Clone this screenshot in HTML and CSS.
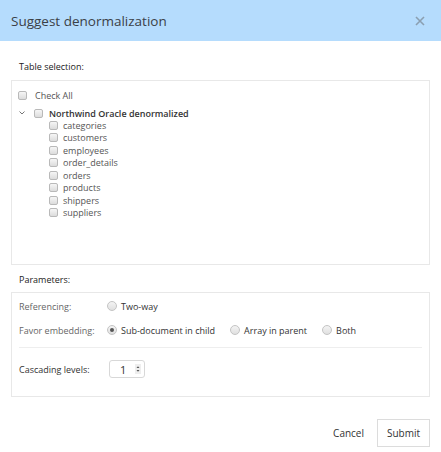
FILE: index.html
```html
<!DOCTYPE html>
<html>
<head>
<meta charset="utf-8">
<link rel="stylesheet" href="styles.css">
</head>
<body>
<div class="dialog">
  <div class="header">
    <span class="title">Suggest denormalization</span>
    <svg class="close" width="10" height="10" viewBox="0 0 10 10"><path d="M1 1L9 9M9 1L1 9" stroke="#8b9fb1" stroke-width="1.6"/></svg>
  </div>
  <div class="content">
    <div class="section-label">Table selection:</div>
    <div class="box tree">
      <div class="row checkall"><span class="cb"></span><span class="txt">Check All</span></div>
      <div class="row db">
        <svg class="chev" width="6" height="4" viewBox="0 0 6 4"><path d="M0.5 0.5L3 3L5.5 0.5" fill="none" stroke="#666" stroke-width="0.9"/></svg>
        <span class="cb"></span><span class="txt bold">Northwind Oracle denormalized</span>
      </div>
      <div class="children">
        <div class="row child"><span class="cb"></span><span class="txt">categories</span></div>
        <div class="row child"><span class="cb"></span><span class="txt">customers</span></div>
        <div class="row child"><span class="cb"></span><span class="txt">employees</span></div>
        <div class="row child"><span class="cb"></span><span class="txt">order_details</span></div>
        <div class="row child"><span class="cb"></span><span class="txt">orders</span></div>
        <div class="row child"><span class="cb"></span><span class="txt">products</span></div>
        <div class="row child"><span class="cb"></span><span class="txt">shippers</span></div>
        <div class="row child"><span class="cb"></span><span class="txt">suppliers</span></div>
      </div>
    </div>
    <div class="section-label params-label">Parameters:</div>
    <div class="box params">
      <div class="prow">
        <span class="plabel">Referencing:</span>
        <span class="opt"><span class="radio"></span>Two-way</span>
      </div>
      <div class="prow second">
        <span class="plabel">Favor embedding:</span>
        <span class="opt"><span class="radio on"></span>Sub-document in child</span>
        <span class="opt"><span class="radio"></span>Array in parent</span>
        <span class="opt"><span class="radio"></span>Both</span>
      </div>
      <div class="sep"></div>
      <div class="prow casc">
        <span class="plabel dark">Cascading levels:</span>
        <span class="num"><span class="numval">1</span><span class="spin"><svg width="4" height="8" viewBox="0 0 4 8"><path d="M0.5 3L2 1.2L3.5 3Z M0.5 5L2 6.8L3.5 5Z" fill="#555"/></svg></span></span>
      </div>
    </div>
    <div class="footer">
      <span class="btn link">Cancel</span>
      <span class="btn outline">Submit</span>
    </div>
  </div>
</div>
</body>
</html>
```
FILE: styles.css
```css
html, body { margin: 0; padding: 0; background: #fff; }
body { font-family: "Open Sans", "Noto Sans", sans-serif; color: #555; }
.dialog { width: 441px; height: 452px; }
.header { height: 41px; background: #b5dcfd; display: flex; align-items: center; justify-content: space-between; padding: 0 16px 0 11px; box-sizing: border-box; }
.title { font-size: 13.5px; color: #3b4046; }
.close { margin-top: 1px; }
.content { padding: 0 11px; }
.section-label { font-size: 9px; color: #222; height: 39px; line-height: 14px; padding-top: 19px; box-sizing: border-box; padding-left: 8px; }
.params-label { height: 27px; padding-top: 8px; }
.box { border: 1px solid #e8e8e8; box-sizing: border-box; }
.tree { height: 185px; padding: 8px 0 0 6px; }
.row { display: flex; align-items: center; height: 12px; font-size: 9px; }
.cb { width: 7px; height: 7px; border: 1px solid #b9b9b9; border-radius: 2px; background: linear-gradient(#f6f6f6, #dcdcdc); flex: none; }
.checkall .txt { margin-left: 8px; }
.db { margin-top: 6px; }
.chev { margin-left: 1px; margin-right: 9px; }
.db .txt { margin-left: 6px; }
.bold { font-weight: 600; color: #333; }
.child { height: 12.5px; padding-left: 31px; }
.child .txt { margin-left: 5px; }
.params { height: 105px; padding: 5px 7px 0 7px; }
.prow { display: flex; align-items: center; height: 16px; font-size: 9px; }
.prow.second { margin-top: 8px; }
.plabel { width: 88px; flex: none; color: #666; }
.plabel.dark { color: #333; }
.opt { display: flex; align-items: center; color: #333; margin-right: 15px; }
.radio { width: 8px; height: 8px; border: 1px solid #c4c4c4; border-radius: 50%; background: linear-gradient(#f4f4f4, #e0e0e0); margin-right: 4px; display: flex; align-items: center; justify-content: center; }
.radio.on::after { content: ""; width: 4px; height: 4px; border-radius: 50%; background: #555; }
.sep { height: 1px; background: #eeeeee; margin: 9px 0 12px; }
.casc { height: 18px; }
.num { width: 36px; height: 18px; border: 1px solid #d8d8d8; border-radius: 3px; box-sizing: border-box; display: flex; align-items: center; margin-left: 2px; }
.numval { font-size: 11px; color: #333; margin-left: 10px; flex: 1; }
.spin { width: 6px; height: 10px; background: #eee; display: flex; align-items: center; justify-content: center; margin-right: 3px; }
.footer { display: flex; justify-content: flex-end; align-items: center; margin-top: 22px; }
.btn { font-size: 10px; color: #333; display: flex; align-items: center; justify-content: center; height: 28px; box-sizing: border-box; }
.btn.link { margin-right: 13px; }
.btn.outline { border: 1px solid #dcdcdc; width: 53px; }
```
